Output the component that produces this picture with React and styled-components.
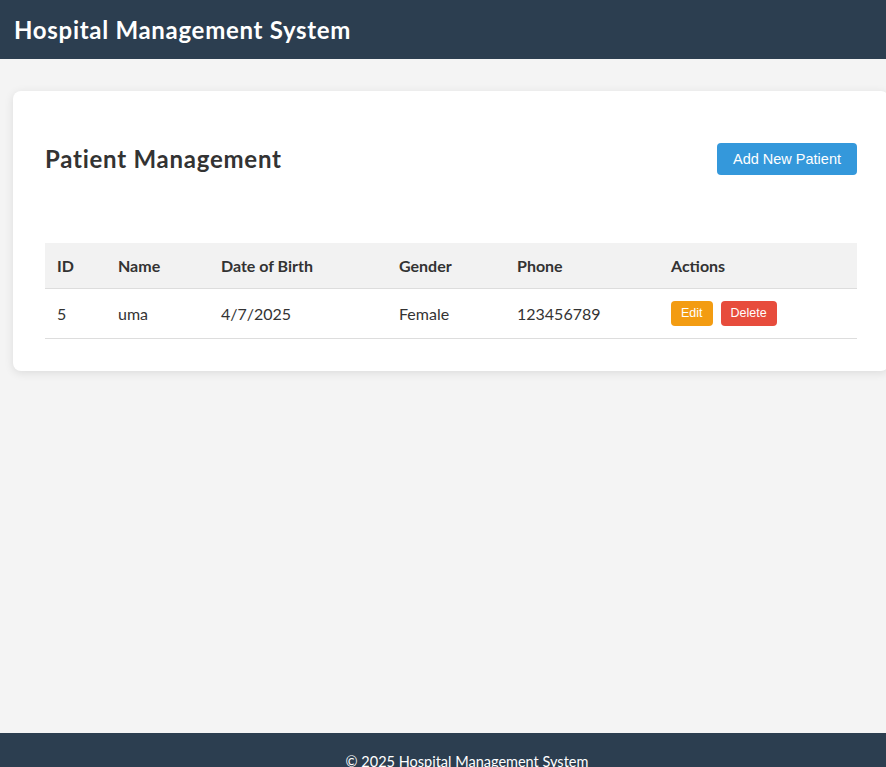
import React from "react";
import styled, { createGlobalStyle } from "styled-components";

const GlobalStyle = createGlobalStyle`
  html, body {
    margin: 0;
    padding: 0;
    overflow-x: hidden;
  }
  body {
    background: #f4f4f4;
    font-family: Lato, "Noto Sans", sans-serif;
    color: #333;
  }
`;

const Header = styled.header`
  height: 59px;
  background: #2c3e50;
  display: flex;
  align-items: center;
  padding: 0 14px;
  box-sizing: border-box;
`;

const Brand = styled.h1`
  margin: 0;
  color: #fff;
  font-size: 24px;
  letter-spacing: 0.7px;
  font-weight: 700;
`;

const Main = styled.main`
  min-height: 674px;
  box-sizing: border-box;
  padding: 32px 0 0 13px;
`;

const Card = styled.section`
  width: calc(100% + 3px);
  box-sizing: border-box;
  background: #fff;
  border-radius: 8px;
  box-shadow: 0 2px 10px rgba(0, 0, 0, 0.1);
  padding: 32px;
`;

const TitleRow = styled.div`
  display: flex;
  align-items: center;
  justify-content: space-between;
  margin-bottom: 48px;
`;

const Title = styled.h2`
  margin: 20px 0;
  font-size: 24px;
  line-height: 32px;
  letter-spacing: 0.75px;
  font-weight: 700;
  color: #333;
`;

const Button = styled.button`
  border: none;
  border-radius: 4px;
  color: #fff;
  background: ${p => p.bg};
  font-family: "Liberation Sans", Arial, sans-serif;
  font-size: ${p => (p.small ? 12.5 : 14.5)}px;
  line-height: ${p => (p.small ? 15 : 16)}px;
  padding: ${p => (p.small ? "5px 10px" : "8px 16px")};
  cursor: pointer;
`;

const Table = styled.table`
  width: 100%;
  border-collapse: collapse;
  table-layout: fixed;
`;

const Th = styled.th`
  width: ${p => p.w - 24}px;
  text-align: left;
  background: #f2f2f2;
  padding: 12px;
  font-size: 16px;
  line-height: 21px;
  font-weight: 700;
  border-bottom: 1px solid #ddd;
`;

const Td = styled.td`
  padding: 12px;
  font-size: 16px;
  line-height: 24px;
  border-bottom: 1px solid #ddd;
`;

const Actions = styled.div`
  display: flex;
  gap: 8px;
`;

const Footer = styled.footer`
  width: 100%;
  background: #2c3e50;
  color: #fff;
  text-align: center;
  padding: 19px 24px;
  font-size: 14.5px;
  line-height: 20px;
`;

const columns = [
  ["ID", 61],
  ["Name", 103],
  ["Date of Birth", 178],
  ["Gender", 118],
  ["Phone", 154],
  ["Actions", 198],
];

const patients = [
  { id: 5, name: "uma", dob: "4/7/2025", gender: "Female", phone: "123456789" },
];

export default function App() {
  return (
    <>
      <GlobalStyle />
      <Header>
        <Brand>Hospital Management System</Brand>
      </Header>
      <Main>
        <Card>
          <TitleRow>
            <Title>Patient Management</Title>
            <Button bg="#3498db">Add New Patient</Button>
          </TitleRow>
          <Table>
            <thead>
              <tr>
                {columns.map(([label, w]) => (
                  <Th key={label} w={w}>{label}</Th>
                ))}
              </tr>
            </thead>
            <tbody>
              {patients.map(p => (
                <tr key={p.id}>
                  <Td>{p.id}</Td>
                  <Td>{p.name}</Td>
                  <Td>{p.dob}</Td>
                  <Td>{p.gender}</Td>
                  <Td>{p.phone}</Td>
                  <Td>
                    <Actions>
                      <Button small bg="#f39c12">Edit</Button>
                      <Button small bg="#e74c3c">Delete</Button>
                    </Actions>
                  </Td>
                </tr>
              ))}
            </tbody>
          </Table>
        </Card>
      </Main>
      <Footer>© 2025 Hospital Management System</Footer>
    </>
  );
}
